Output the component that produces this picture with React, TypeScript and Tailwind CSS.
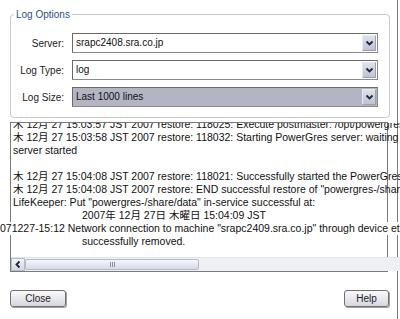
import React from "react";

const Chevron = ({ dir = "down" }: { dir?: "down" | "up" | "left" | "right" }) => {
  const paths: Record<string, string> = {
    down: "M1.5 2.5 L4.5 5.5 L7.5 2.5",
    up: "M1.5 5.5 L4.5 2.5 L7.5 5.5",
    left: "M5.5 1.5 L2.5 4.5 L5.5 7.5",
    right: "M3 1.5 L6 4.5 L3 7.5",
  };
  return (
    <svg width="9" height="9" viewBox="0 0 9 9">
      <path d={paths[dir]} fill="none" stroke="#1c2440" strokeWidth="1.8" />
    </svg>
  );
};

const Select = ({ value, selected }: { value: string; selected?: boolean }) => (
  <div
    className={`h-[20px] flex items-center border border-[#8a8a8a] border-t-[#6a6a6a] border-l-[#6a6a6a] pl-[3px] pr-[1px] ${
      selected ? "bg-[#b3b5c2]" : "bg-white"
    }`}
  >
    <span className="flex-1 text-[10px] text-[#111] leading-none">{value}</span>
    <div className="w-[14px] h-[16px] flex items-center justify-center bg-gradient-to-b from-[#dfe2ea] to-[#bfc3d0] border border-[#e8eaf0] border-r-[#9ca0ae] border-b-[#9ca0ae]">
      <Chevron dir="down" />
    </div>
  </div>
);

const Button = ({ label, w }: { label: string; w: string }) => (
  <div
    className={`${w} h-[17px] flex items-center justify-center rounded-[3px] border border-[#707070] bg-gradient-to-b from-[#fafafa] to-[#d6d8e0] shadow-[1px_1px_0_#a0a0a0] text-[10px] text-[#222]`}
  >
    {label}
  </div>
);

const lines: { t: string; indent?: boolean; out?: boolean }[] = [
  { t: "木 12月 27 15:03:57 JST 2007 restore: 118025: Execute postmaster: /opt/powergres/bin/postmaster" },
  { t: "木 12月 27 15:03:58 JST 2007 restore: 118032: Starting PowerGres server: waiting for" },
  { t: "server started" },
  { t: " " },
  { t: "木 12月 27 15:04:08 JST 2007 restore: 118021: Successfully started the PowerGres server" },
  { t: "木 12月 27 15:04:08 JST 2007 restore: END successful restore of \"powergres-/share/data\"" },
  { t: "LifeKeeper: Put \"powergres-/share/data\" in-service successful at:" },
  { t: "2007年 12月 27日 木曜日 15:04:09 JST", indent: true },
  { t: "071227-15:12 Network connection to machine \"srapc2409.sra.co.jp\" through device eth0", out: true },
  { t: "successfully removed.", indent: true },
];

export default function App() {
  return (
    <div className="w-[400px] h-[319px] bg-white flex font-['Liberation_Sans',Arial,'Noto_Sans_CJK_JP',sans-serif] text-[10px] overflow-hidden">
      <div className="w-[398px] h-full border-r border-[#7a7a7a] flex flex-col pl-[10px] pt-[7px]">
        <fieldset className="w-[380px] border border-[#cacaca] rounded-[4px] pb-[10px] pr-[11px]">
          <legend className="ml-[3px] px-[2px] text-[10px] leading-[14px] text-[#2b4f8f]">
            <span className="relative top-[1px]">Log Options</span>
          </legend>
          <div className="mt-[12px] grid grid-cols-[53px_1fr] gap-x-[8px] gap-y-[7px] items-center">
            <div className="text-right text-[#222]">Server:</div>
            <Select value="srapc2408.sra.co.jp" />
            <div className="text-right text-[#222]">Log Type:</div>
            <Select value="log" />
            <div className="text-right text-[#222]">Log Size:</div>
            <Select value="Last 1000 lines" selected />
          </div>
        </fieldset>

        <div className="mt-[4px] w-[378px] h-[150px] border border-[#7a7a7a] grid grid-cols-[1fr_14px] grid-rows-[1fr_14px]">
          <div className="relative [clip-path:inset(0_0_0_-20px)]">
            <div className="mt-[-5px] pl-[2px] text-[10.5px] text-[#111] leading-[13px] whitespace-pre">
              {lines.map((l, i) => (
                <div
                  key={i}
                  className={
                    l.indent ? "pl-[69px]" : l.out ? "ml-[-13px] bg-white w-max" : ""
                  }
                >
                  {l.t}
                </div>
              ))}
            </div>
          </div>
          <div className="flex flex-col bg-[#eef0f4] border-l border-[#e2e4ea]">
            <div className="h-[14px] flex items-center justify-center bg-gradient-to-b from-[#f2f4f8] to-[#d4d8e2] border border-[#b8bcc8]">
              <Chevron dir="up" />
            </div>
            <div className="flex-1 flex flex-col justify-end">
              <div className="h-[16px] mx-[1px] bg-gradient-to-r from-[#e8ecf4] to-[#d0d6e4] border border-[#b0b6c4] rounded-[2px] flex flex-col items-center justify-center gap-[1px]">
                <div className="w-[6px] h-px bg-[#8890a0]" />
                <div className="w-[6px] h-px bg-[#8890a0]" />
              </div>
            </div>
            <div className="h-[14px] flex items-center justify-center bg-gradient-to-b from-[#f2f4f8] to-[#d4d8e2] border border-[#b8bcc8]">
              <Chevron dir="down" />
            </div>
          </div>
          <div className="flex bg-[#eef0f4] border-t border-[#e2e4ea]">
            <div className="w-[14px] flex items-center justify-center bg-gradient-to-b from-[#f2f4f8] to-[#d4d8e2] border border-[#b8bcc8]">
              <Chevron dir="left" />
            </div>
            <div className="flex-1 flex">
              <div className="w-[174px] my-[1px] bg-gradient-to-b from-[#f4f6fa] to-[#d6dae6] border border-[#b4bac8] rounded-[2px] flex items-center justify-center gap-[1px]">
                <div className="w-px h-[5px] bg-[#8890a0]" />
                <div className="w-px h-[5px] bg-[#8890a0]" />
                <div className="w-px h-[5px] bg-[#8890a0]" />
              </div>
            </div>
            <div className="w-[14px] flex items-center justify-center bg-gradient-to-b from-[#f2f4f8] to-[#d4d8e2] border border-[#b8bcc8]">
              <Chevron dir="right" />
            </div>
          </div>
          <div className="bg-[#f4f4f6]" />
        </div>

        <div className="mt-[18px] w-[379px] flex justify-between">
          <Button label="Close" w="w-[56px]" />
          <Button label="Help" w="w-[45px]" />
        </div>
      </div>
    </div>
  );
}
